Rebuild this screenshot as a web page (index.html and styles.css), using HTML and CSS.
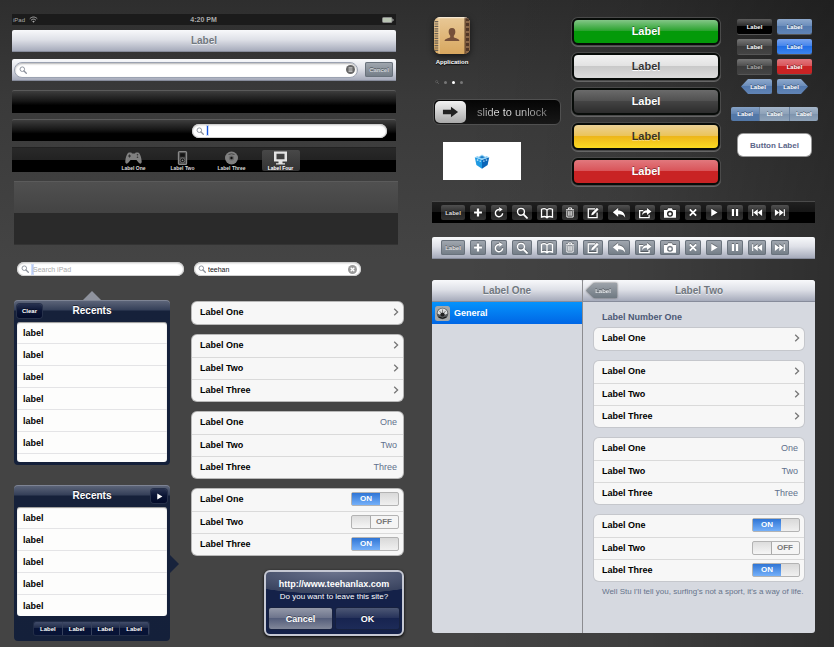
FILE: index.html
```html
<!DOCTYPE html>
<html lang="en">
<head>
<meta charset="utf-8">
<title>iPad interface kit</title>
<meta name="viewport" content="width=device-width, initial-scale=1">
<link rel="stylesheet" href="styles.css">
</head>
<body>
<svg class="sprite" aria-hidden="true">
  <symbol id="i-search" viewBox="0 0 14 14"><circle cx="5.8" cy="5.6" r="4" fill="none" stroke="currentColor" stroke-width="1.6"/><path d="M8.8 8.7l4 4" stroke="currentColor" stroke-width="2.2" stroke-linecap="round"/></symbol>
  <symbol id="i-plus" viewBox="0 0 14 14"><path d="M7 2v10M2 7h10" stroke="currentColor" stroke-width="2.8"/></symbol>
  <symbol id="i-refresh" viewBox="0 0 14 14"><path d="M7.5 3.2A4.6 4.6 0 1 0 11.6 8" fill="none" stroke="currentColor" stroke-width="1.8"/><path d="M7 .2l4.6 2.6L7.6 6z" fill="currentColor"/></symbol>
  <symbol id="i-book" viewBox="0 0 16 14"><path d="M8 3.6C6.6 1.8 3.8 1.6 1.6 2.6v9.2c2.2-.9 5-.8 6.4.7 1.4-1.5 4.200-1.600 6.400-.7V2.600C12.200 1.600 9.400 1.800 8 3.600zM8 3.600v8.600" fill="none" stroke="currentColor" stroke-width="1.500"/></symbol>
  <symbol id="i-trash" viewBox="0 0 14 14"><path d="M2 3.500h10M5 3.200V1.200h4v2M3 4.500v8.300h8V4.500M5.400 5.200v6M7 5.200v6M8.600 5.200v6" fill="none" stroke="currentColor" stroke-width="1.200"/></symbol>
  <symbol id="i-compose" viewBox="0 0 14 14"><path d="M9.500 2.200H1.500v10.300h10.300V6.500" fill="none" stroke="currentColor" stroke-width="1.500"/><path d="M5 9.600l.6-2.500L11.600 1l1.900 1.800-6.100 6.200z" fill="currentColor"/></symbol>
  <symbol id="i-reply" viewBox="0 0 16 14"><path d="M.8 6.200L7 1.200v3c4.500 0 8 2.600 8.200 8.200C13.600 9.400 11 8.300 7 8.400v3z" fill="currentColor"/></symbol>
  <symbol id="i-share" viewBox="0 0 16 14"><path d="M6 4.200H1.800v8.300h11V9" fill="none" stroke="currentColor" stroke-width="1.500"/><path d="M4.500 9.500c.2-4 2.500-5.800 5.800-5.800V1.200l5.200 4-5.200 4V6.700c-2.600 0-4.300.6-5.800 2.800z" fill="currentColor"/></symbol>
  <symbol id="i-camera" viewBox="0 0 16 14"><path fill-rule="evenodd" d="M1 3.500h3.800l1.100-1.900h4.200l1.100 1.900H15v9H1zM8 4.400a3.500 3.500 0 1 0 0 7 3.500 3.500 0 0 0 0-7zm0 1.600a1.900 1.900 0 1 1 0 3.800 1.900 1.900 0 0 1 0-3.800z" fill="currentColor"/></symbol>
  <symbol id="i-close" viewBox="0 0 14 14"><path d="M3 3l8 8M11 3l-8 8" stroke="currentColor" stroke-width="2.300"/></symbol>
  <symbol id="i-play" viewBox="0 0 14 14"><path d="M3.500 2.200l8 4.800-8 4.800z" fill="currentColor"/></symbol>
  <symbol id="i-pause" viewBox="0 0 14 14"><path d="M3 2.500h2.800v9H3zM8.200 2.500H11v9H8.200z" fill="currentColor"/></symbol>
  <symbol id="i-prev" viewBox="0 0 16 14"><path d="M1.500 2.500H3v9H1.500zM9 2.500v9L3.200 7zM14.800 2.500v9L9 7z" fill="currentColor"/></symbol>
  <symbol id="i-next" viewBox="0 0 16 14"><path d="M13 2.500h1.500v9H13zM7 2.500v9L12.800 7zM1.200 2.500v9L7 7z" fill="currentColor"/></symbol>
  <symbol id="i-chevron" viewBox="0 0 6 8"><path d="M1.200 .8L4.600 4 1.200 7.200" fill="none" stroke="currentColor" stroke-width="1.300"/></symbol>
</svg>

<main class="page">
  <section class="column">
    <header class="status bar">
      <span class="status-left">iPad
        <svg width="9" height="7" viewBox="0 0 18 14" aria-hidden="true"><path d="M1.500 5.500c4.500-4.600 10.500-4.600 15 0M4.200 8.400c2.900-2.900 6.700-2.900 9.600 0" fill="none" stroke="#aaa" stroke-width="2"/><path d="M6.500 10.700c1.600-1.400 3.400-1.400 5 0L9 13.400z" fill="#aaa"/></svg>
      </span>
      <span class="status-time">4:20 PM</span>
      <svg class="battery" width="12" height="6" viewBox="0 0 12 6" aria-hidden="true"><rect x=".5" y=".5" width="9.500" height="5" rx="1" fill="#b9c4b3" stroke="#888"/><path d="M10.500 2h1v2h-1z" fill="#aaa"/></svg>
    </header>
    <h1 class="bar nav silver">Label</h1>
    <form class="bar silver finder">
      <label class="field wide"><svg class="glass"><use href="#i-search"/></svg><input type="search" aria-label="Search"><svg class="reader" viewBox="0 0 10 10" aria-hidden="true"><circle cx="5" cy="5" r="5" fill="#666"/><path d="M2.800 3h4.400M2.800 4.400h4.400M2.800 5.800h4.400M2.800 7.200h4.400" stroke="#ddd" stroke-width=".8"/></svg></label>
      <button class="tool steel cancel" type="button">Cancel</button>
    </form>
    <div class="bar black"></div>
    <div class="bar black short"><label class="field pill"><svg class="glass"><use href="#i-search"/></svg><span class="caret"></span><input type="search" aria-label="Search page"></label></div>
    <nav class="bar tabs">
      <a class="tab" href="#one"><svg viewBox="0 0 17 12"><path d="M4 .5h2.300l.7.900h3l.7-.9H13c2 0 3.500 5.500 3.700 9 .1 2.500-2 2.800-3.200 1L11.500 8h-6l-2 2.500c-1.200 1.800-3.300 1.500-3.200-1C.5 6 2 .5 4 .5z" fill="#808080"/><path d="M3 4h3M4.500 2.500v3" stroke="#333" stroke-width="1"/><circle cx="12.500" cy="2.800" r=".8" fill="#333"/><circle cx="12.500" cy="5.200" r=".8" fill="#333"/></svg>Label One</a>
      <a class="tab" href="#two"><svg viewBox="0 0 10 15"><rect x=".7" y=".7" width="8.600" height="13.600" rx="1" fill="#444" stroke="#888" stroke-width="1.400"/><rect x="2.500" y="2.400" width="5" height="3.800" fill="#151515"/><circle cx="5" cy="10" r="2.500" fill="#111" stroke="#888" stroke-width=".7"/><circle cx="5" cy="10" r="1" fill="#888"/></svg>Label Two</a>
      <a class="tab" href="#three"><svg viewBox="0 0 14 14"><circle cx="7" cy="7" r="6.500" fill="#808080"/><path d="M4 3.500q3-1.500 6 0" stroke="#444" fill="none"/><circle cx="7" cy="7" r="2.600" fill="#666"/><circle cx="7" cy="7" r="1.200" fill="#111"/></svg>Label Three</a>
      <a class="tab current" href="#four"><svg viewBox="0 0 14 14"><path fill-rule="evenodd" d="M.5.500h13v10H.5zM3 2.800v5.400h8V2.800zM5 10.500h4v1.800h2.500v1.200h-9v-1.200H5z" fill="#e4e4e4"/></svg>Label Four</a>
    </nav>
    <div class="shelf"><div></div><div></div></div>
    <div class="searches">
      <label class="field pill"><svg class="glass"><use href="#i-search"/></svg><span class="caret pale"></span><input type="search" placeholder="Search iPad" aria-label="Search iPad"></label>
      <label class="field pill"><svg class="glass"><use href="#i-search"/></svg><input type="search" value="teehan" aria-label="Search term"><svg class="reader" viewBox="0 0 10 10" aria-hidden="true"><circle cx="5" cy="5" r="5" fill="#999"/><path d="M3 3l4 4M7 3L3 7" stroke="#fff" stroke-width="1.400"/></svg></label>
    </div>

    <div class="lower">
      <div class="popovers">
        <section class="popover up">
          <header><button class="mini left" type="button">Clear</button><h2>Recents</h2></header>
          <ul class="tall"><li>label</li><li>label</li><li>label</li><li>label</li><li>label</li><li>label</li><li></li></ul>
        </section>
        <section class="popover side">
          <header><h2>Recents</h2><button class="mini right" type="button" aria-label="Play"><svg><use href="#i-play"/></svg></button></header>
          <ul><li>label</li><li>label</li><li>label</li><li>label</li><li>label</li></ul>
          <footer><button type="button">Label</button><button type="button">Label</button><button type="button">Label</button><button type="button">Label</button></footer>
        </section>
      </div>
      <div class="groups">
        <ul class="group"><li><a href="#a">Label One<svg><use href="#i-chevron"/></svg></a></li></ul>
        <ul class="group">
          <li><a href="#a">Label One<svg><use href="#i-chevron"/></svg></a></li>
          <li><a href="#b">Label Two<svg><use href="#i-chevron"/></svg></a></li>
          <li><a href="#c">Label Three<svg><use href="#i-chevron"/></svg></a></li>
        </ul>
        <ul class="group"><li>Label One<span class="value">One</span></li><li>Label Two<span class="value">Two</span></li><li>Label Three<span class="value">Three</span></li></ul>
        <ul class="group">
          <li><label for="s1">Label One</label><span class="switch on"><input id="s1" type="checkbox" checked><span>ON</span></span></li>
          <li><label for="s2">Label Two</label><span class="switch"><input id="s2" type="checkbox"><span>OFF</span></span></li>
          <li><label for="s3">Label Three</label><span class="switch on"><input id="s3" type="checkbox" checked><span>ON</span></span></li>
        </ul>
        <section class="alert" role="alertdialog">
          <h2>http://www.teehanlax.com</h2>
          <p>Do you want to leave this site?</p>
          <div><button class="pale" type="button">Cancel</button><button type="button">OK</button></div>
        </section>
      </div>
    </div>
  </section>

  <section class="column">
    <div class="showcase">
      <div class="home">
        <figure class="app">
          <svg viewBox="0 0 36 37" aria-hidden="true">
            <defs><linearGradient id="tan" x2="0" y2="1"><stop stop-color="#e8c896"/><stop offset="1" stop-color="#d8a75f"/></linearGradient><clipPath id="round"><rect width="36" height="37" rx="6"/></clipPath></defs>
            <g clip-path="url(#round)"><rect width="36" height="37" fill="url(#tan)"/><path d="M31 0h5v37h-5z" fill="#8a6748"/><path d="M33.500 1v36" stroke="#503626" stroke-width="3" stroke-dasharray="3 2"/><path d="M31 0v37" stroke="#5c4029"/><path d="M2.500 4v30" stroke="#6b6256" stroke-width="4" stroke-dasharray="1.200 1.200"/><path d="M5 0v37" stroke="#f1dcb5" stroke-width=".8"/><path d="M0 .7h36" stroke="#fff" stroke-opacity=".7"/></g>
            <path d="M18 11c2.700 0 3.600 2 3.300 4.500-.2 1.600-1 2.600-1.500 3.300v1.500c2 1.200 5.200 1.300 5.700 3.700h-15c.5-2.400 3.700-2.500 5.700-3.700v-1.500c-.5-.7-1.300-1.700-1.500-3.300C14.400 13 15.300 11 18 11z" fill="#76503a"/>
          </svg>
          <figcaption>Application</figcaption>
        </figure>
        <div class="dots" aria-hidden="true"><svg><use href="#i-search"/></svg><i></i><i class="now"></i><i></i></div>
        <div class="unlock"><button type="button" aria-label="Unlock"><svg viewBox="0 0 18 12"><path d="M1 3.500h8.500V.5L17 6l-7.500 5.500v-3H1z" fill="#222"/></svg></button><span>slide to unlock</span></div>
        <div class="card"><svg viewBox="0 0 16 15" aria-hidden="true"><path d="M.8 3.200L8 5.800v8.900L2.400 11z" fill="#1f9ae2"/><path d="M15.200 3.200L8 5.800v8.900l5.600-3.700z" fill="#0b66b8"/><path d="M.8 3.200L3.600 2l1.200.8L8 .6l3.200 2.200 1.200-.8 2.800 1.200L8 5.800z" fill="#8fd0f6"/><path d="M5 3.300l3-1.200 3 1.200-3 1z" fill="#1a7cc8"/><path d="M2.800 5.800l1.500.6M5.600 7l1.200.4" stroke="#d8f0ff" stroke-width="1.200"/><path d="M9.300 7.400l1.200-.5M11.800 6.400l1.400-.6" stroke="#b5dcf8" stroke-width="1.200"/></svg></div>
      </div>
      <div class="big-buttons">
        <button class="big green" type="button">Label</button>
        <button class="big white" type="button">Label</button>
        <button class="big grey" type="button">Label</button>
        <button class="big yellow" type="button">Label</button>
        <button class="big red" type="button">Label</button>
      </div>
      <div class="small-buttons">
        <div class="pairs">
          <button class="small ink" type="button">Label</button><button class="small blue" type="button">Label</button>
          <button class="small coal" type="button">Label</button><button class="small azure" type="button">Label</button>
          <button class="small coal dim" type="button">Label</button><button class="small red" type="button">Label</button>
          <button class="small blue point-left" type="button">Label</button><button class="small blue point-right" type="button">Label</button>
        </div>
        <div class="segments"><button class="picked" type="button">Label</button><button type="button">Label</button><button type="button">Label</button></div>
        <button class="plain" type="button">Button Label</button>
      </div>
    </div>

    <div class="toolbar dark" role="toolbar" aria-label="Dark toolbar">
      <button class="tool text" type="button">Label</button>
      <button class="tool" type="button" aria-label="Add"><svg><use href="#i-plus"/></svg></button>
      <button class="tool" type="button" aria-label="Refresh"><svg><use href="#i-refresh"/></svg></button>
      <button class="tool mid" type="button" aria-label="Search"><svg><use href="#i-search"/></svg></button>
      <button class="tool mid" type="button" aria-label="Bookmarks"><svg><use href="#i-book"/></svg></button>
      <button class="tool" type="button" aria-label="Delete"><svg><use href="#i-trash"/></svg></button>
      <button class="tool mid" type="button" aria-label="Compose"><svg><use href="#i-compose"/></svg></button>
      <button class="tool wide" type="button" aria-label="Reply"><svg><use href="#i-reply"/></svg></button>
      <button class="tool mid" type="button" aria-label="Share"><svg><use href="#i-share"/></svg></button>
      <button class="tool mid" type="button" aria-label="Camera"><svg><use href="#i-camera"/></svg></button>
      <button class="tool" type="button" aria-label="Stop"><svg><use href="#i-close"/></svg></button>
      <button class="tool" type="button" aria-label="Play"><svg><use href="#i-play"/></svg></button>
      <button class="tool" type="button" aria-label="Pause"><svg><use href="#i-pause"/></svg></button>
      <button class="tool skip" type="button" aria-label="Previous"><svg><use href="#i-prev"/></svg></button>
      <button class="tool skip" type="button" aria-label="Next"><svg><use href="#i-next"/></svg></button>
    </div>
    <div class="toolbar silver" role="toolbar" aria-label="Light toolbar">
      <button class="tool steel text" type="button">Label</button>
      <button class="tool steel" type="button" aria-label="Add"><svg><use href="#i-plus"/></svg></button>
      <button class="tool steel" type="button" aria-label="Refresh"><svg><use href="#i-refresh"/></svg></button>
      <button class="tool steel mid" type="button" aria-label="Search"><svg><use href="#i-search"/></svg></button>
      <button class="tool steel mid" type="button" aria-label="Bookmarks"><svg><use href="#i-book"/></svg></button>
      <button class="tool steel" type="button" aria-label="Delete"><svg><use href="#i-trash"/></svg></button>
      <button class="tool steel mid" type="button" aria-label="Compose"><svg><use href="#i-compose"/></svg></button>
      <button class="tool steel wide" type="button" aria-label="Reply"><svg><use href="#i-reply"/></svg></button>
      <button class="tool steel mid" type="button" aria-label="Share"><svg><use href="#i-share"/></svg></button>
      <button class="tool steel mid" type="button" aria-label="Camera"><svg><use href="#i-camera"/></svg></button>
      <button class="tool steel" type="button" aria-label="Stop"><svg><use href="#i-close"/></svg></button>
      <button class="tool steel" type="button" aria-label="Play"><svg><use href="#i-play"/></svg></button>
      <button class="tool steel" type="button" aria-label="Pause"><svg><use href="#i-pause"/></svg></button>
      <button class="tool steel skip" type="button" aria-label="Previous"><svg><use href="#i-prev"/></svg></button>
      <button class="tool steel skip" type="button" aria-label="Next"><svg><use href="#i-next"/></svg></button>
    </div>

    <div class="split">
      <section class="master">
        <h2 class="nav silver">Label One</h2>
        <a class="selected" href="#general"><svg viewBox="0 0 15 15" aria-hidden="true"><rect width="15" height="15" rx="2.500" fill="#a5a8aa"/><circle cx="7.500" cy="7.500" r="5.800" fill="#55595c"/><path d="M2.500 7.500a5 5 0 0 1 10 0l-2.500 1.200a2.600 2.600 0 0 0-5 0z" fill="#dcdedf"/><path d="M4.500 5l1.500 2M7.500 3.500v3M10.500 5L9 7" stroke="#555" stroke-width=".7"/><circle cx="7.500" cy="8.500" r="1.900" fill="#222"/><path d="M3.500 11q4 2.500 8 0" stroke="#111" fill="none"/></svg>General</a>
      </section>
      <section class="detail">
        <header class="nav silver"><span class="back"><button type="button">Label</button></span><h2>Label Two</h2></header>
        <h3>Label Number One</h3>
        <div class="groups">
          <ul class="group"><li><a href="#a">Label One<svg><use href="#i-chevron"/></svg></a></li></ul>
          <ul class="group">
            <li><a href="#a">Label One<svg><use href="#i-chevron"/></svg></a></li>
            <li><a href="#b">Label Two<svg><use href="#i-chevron"/></svg></a></li>
            <li><a href="#c">Label Three<svg><use href="#i-chevron"/></svg></a></li>
          </ul>
          <ul class="group"><li>Label One<span class="value">One</span></li><li>Label Two<span class="value">Two</span></li><li>Label Three<span class="value">Three</span></li></ul>
          <ul class="group">
            <li><label for="d1">Label One</label><span class="switch on"><input id="d1" type="checkbox" checked><span>ON</span></span></li>
            <li><label for="d2">Label Two</label><span class="switch"><input id="d2" type="checkbox"><span>OFF</span></span></li>
            <li><label for="d3">Label Three</label><span class="switch on"><input id="d3" type="checkbox" checked><span>ON</span></span></li>
          </ul>
        </div>
        <p class="note">Well Stu I'll tell you, surfing's not a sport, it's a way of life.</p>
      </section>
    </div>
  </section>
</main>
</body>
</html>
```
FILE: styles.css
```css
* { box-sizing: border-box; }

body {
  margin: 0;
  min-height: 100vh;
  font-family: "Liberation Sans", Arial, sans-serif;
  font-size: 9px;
  background:
    linear-gradient(to right, transparent 55%, rgba(0, 0, 0, .08) 75%, rgba(0, 0, 0, .32)),
    linear-gradient(#2e2e2e, #3a3a3a 100px, #444 260px);
}

h1, h2, h3, p, ul, figure { margin: 0; padding: 0; font-size: inherit; }
ul { list-style: none; }
a { color: inherit; text-decoration: none; }
svg { display: block; flex: none; }
.sprite { position: absolute; width: 0; height: 0; }

button {
  margin: 0;
  padding: 0;
  border: 0;
  font-family: inherit;
  font-size: 6px;
  font-weight: bold;
  color: #fff;
  text-shadow: 0 -1px 0 rgba(0, 0, 0, .4);
}

.page {
  display: grid;
  grid-template-columns: 392fr 387fr;
  column-gap: 27px;
  padding: 14px 16px 5px 12px;
}

/* Bars */
.bar {
  height: 22px;
  margin: 0 8px 7px 0;
}

.silver {
  background: linear-gradient(#f8f9fb, #dfe1e8 45%, #a6abbb);
  border-bottom: 1px solid #878c9b;
  border-radius: 2px 2px 0 0;
}

.nav {
  display: flex;
  align-items: center;
  justify-content: center;
  height: 22px;
  font-size: 10px;
  font-weight: bold;
  color: #71787f;
  text-shadow: 0 1px 0 rgba(255, 255, 255, .7);
}

.status {
  display: grid;
  grid-template-columns: 1fr auto 1fr;
  align-items: center;
  height: 11px;
  margin-bottom: 5px;
  padding: 0 2px 0 1px;
  background: #1b1b1b;
  color: #aaa;
  font-size: 7px;
}
.status-left { display: flex; align-items: center; gap: 4px; font-size: 6px; }
.status-time { font-weight: bold; }
.battery { justify-self: end; }

.finder {
  display: flex;
  align-items: center;
  gap: 7px;
  margin-bottom: 9px;
  padding: 0 3px 0 2px;
}

.field {
  display: flex;
  align-items: center;
  height: 14px;
  padding: 0 4px;
  border-radius: 8px;
  background: #fff;
  color: #111;
}
.field input {
  flex: 1;
  min-width: 0;
  width: 100%;
  margin: 0;
  padding: 0;
  border: 0;
  outline: 0;
  background: none;
  font-family: inherit;
  font-size: 7px;
  color: #111;
  appearance: none;
}
.field input::placeholder { color: #aaa; opacity: 1; }
.field input::-webkit-search-cancel-button { display: none; }
.field.wide { flex: 1; height: 16px; padding: 0 2px 0 4px; border: 1px solid #9ba2b1; box-shadow: inset 0 1px 2px rgba(0, 0, 0, .3); }
.field.pill { box-shadow: inset 0 0 0 1px #d0d0d0, inset 0 1px 2px rgba(0, 0, 0, .3); }
.glass { width: 8px; height: 8px; margin-right: 2px; color: #8a8f9a; }
.reader { width: 9px; height: 9px; }
.caret { width: 1px; height: 9px; margin-left: 1px; background: #1556e0; outline: 1px solid rgba(21, 86, 224, .2); }
.caret.pale { background: #b9ccf6; }

.black {
  height: 23px;
  margin-bottom: 6px;
  border-top: 1px solid #5a5a5a;
  border-radius: 2px 2px 0 0;
  background: linear-gradient(#3d3d3d, #171717 45%, #000 65%);
}
.black.short { display: flex; align-items: center; justify-content: flex-end; height: 22px; padding-right: 9px; }
.black .field { width: 52%; }

.tabs {
  display: flex;
  justify-content: center;
  gap: 11px;
  height: 25px;
  margin-bottom: 9px;
  padding: 2px 0 1px 6px;
  border-top: 1px solid #222;
  background: linear-gradient(#292929, #222 48%, #000 50%);
}
.tab {
  display: flex;
  flex-direction: column;
  align-items: center;
  justify-content: space-between;
  width: 38px;
  border-radius: 2px;
  font-size: 5px;
  line-height: 6px;
  font-weight: bold;
  color: #ddd;
  white-space: nowrap;
}
.tab svg { width: 17px; height: 14px; margin-top: 1px; }
.tab.current { background: linear-gradient(#484848, #333); color: #fff; }

.shelf { margin: 0 6px 17px 2px; background: #2a2a2a; }
.shelf div { height: 32px; border-bottom: 1px solid #333; }
.shelf div:first-child { border-top: 1px solid #5b5b5b; background: linear-gradient(#505050, #434343); border-bottom: 0; }

.searches { display: grid; grid-template-columns: 167fr 167fr; gap: 10px; margin: 0 43px 24px 5px; }

/* Popovers and grouped tables */
.lower { display: grid; grid-template-columns: 156fr 211fr; column-gap: 22px; margin: 0 1px 0 2px; }
.popovers { display: flex; flex-direction: column; gap: 20px; }

.popover {
  position: relative;
  padding: 0 3px 3px;
  border-radius: 4px;
  background: linear-gradient(#60687c, #343f58 10px, #16213a 11px, #14203a);
  box-shadow: inset 0 1px 0 rgba(255, 255, 255, .2);
}
.popover::before { content: ""; position: absolute; }
.up::before { left: 50%; top: -9px; margin-left: -9px; border: 9px solid transparent; border-top: 0; border-bottom-color: #8f939e; }
.side::before { left: 100%; top: 70px; border: 9px solid transparent; border-right: 0; border-left-color: #18233c; }
.popover header { display: flex; align-items: center; justify-content: center; height: 22px; padding-bottom: 2px; }
.popover h2 { font-size: 10px; color: #fff; text-shadow: 0 -1px 0 rgba(0, 0, 0, .5); }

.mini {
  position: absolute;
  top: 4px;
  height: 14px;
  border-radius: 3px;
  background: linear-gradient(#27314f, #0a1434 48%, #020a28);
  box-shadow: 0 0 0 1px #26304a;
}
.mini.left { left: 3px; width: 25px; }
.mini.right { right: 3px; width: 16px; }
.mini svg { width: 9px; height: 9px; margin: auto; }

.popover ul {
  height: 109px;
  overflow: hidden;
  border-radius: 3px;
  background: #fdfdfc;
  box-shadow: inset 0 1px 1px rgba(0, 0, 0, .4);
  font-weight: bold;
}
.popover ul.tall { height: 140px; }
.popover li { height: 22px; padding: 0 6px; line-height: 22px; border-bottom: 1px solid #e4e4e6; }
.popover li:last-child { border-bottom: 0; }

.popover footer { display: flex; margin: 6px 18px 3px 17px; border-radius: 2px; overflow: hidden; box-shadow: 0 0 0 1px #222d47; }
.popover footer button { flex: 1; height: 13px; background: linear-gradient(#414c69, #1d2947 48%, #071336 50%); border-right: 1px solid #36415c; }

.groups { display: flex; flex-direction: column; gap: 11px; }
.lower .groups { padding-top: 2px; }
.group { border-radius: 5px; background: #f7f7f7; font-weight: bold; box-shadow: 0 0 0 1px #b8b8b8; color: #000; }
.group li, .group a { display: flex; align-items: center; justify-content: space-between; }
.group li { height: 22px; padding: 0 4px 2px 8px; }
.group li + li { border-top: 1px solid #dadada; }
.group a { flex: 1; height: 100%; }
.group a svg { width: 6px; height: 8px; color: #777; }
.value { padding-right: 2px; font-weight: normal; color: #61708c; }

.switch {
  position: relative;
  display: flex;
  align-items: center;
  width: 48px;
  height: 14px;
  border: 1px solid #b3b3b3;
  border-radius: 2px;
  background: linear-gradient(to right, transparent 18px, #aaa 18px, #aaa 19px, #f5f5f5 19px), linear-gradient(#ddd, #f6f6f6);
  font-size: 8px;
  color: #777;
}
.switch span { width: 28px; margin-left: 18px; text-align: center; }
.switch input { position: absolute; inset: 0; width: 100%; height: 100%; margin: 0; opacity: 0; }
.switch.on { background: linear-gradient(#d9d9d9, #f0f0f0); }
.switch.on span { margin-left: 0; line-height: 12px; background: linear-gradient(#2f75d5, #75b0f9); color: #fff; }

.alert {
  align-self: flex-end;
  width: 140px;
  height: 66px;
  margin: 4px -1px 0 0;
  padding: 7px 3px 3px;
  border: 2px solid #c5c8d3;
  border-radius: 6px;
  background: radial-gradient(ellipse 110px 22px at 50% 0, #6b738c, #39435f 98%, transparent), #142149;
  box-shadow: 0 1px 3px #000;
  color: #fff;
  text-align: center;
}
.alert h2 { line-height: 10px; }
.alert p { margin: 3px 0 6px; font-size: 8px; line-height: 10px; white-space: nowrap; }
.alert div { display: grid; grid-template-columns: 1fr 1fr; gap: 4px; }
.alert button { height: 21px; border-radius: 2px; font-size: 9px; background: linear-gradient(#4d5875, #26325a 48%, #172450 50%, #1d2b58); box-shadow: 0 0 0 1px #17213f; }
.alert .pale { background: linear-gradient(#9499a9, #6c738b 48%, #555e7b 50%, #818799); }

/* Home screen samples */
.showcase { display: grid; grid-template-columns: 128fr 148fr 87fr; column-gap: 11px; padding: 4px 0 0 2px; margin-bottom: 16px; }
.home { display: flex; flex-direction: column; align-items: flex-start; }
.app { display: flex; flex-direction: column; align-items: center; width: 36px; margin: -1px 0 0 1px; }
.app svg { width: 36px; height: 37px; filter: drop-shadow(0 2px 3px rgba(0, 0, 0, .6)); }
.app figcaption { margin-top: 4px; font-size: 6px; line-height: 8px; font-weight: bold; color: #fff; text-shadow: 0 1px 1px #000; }
.dots { display: flex; align-items: center; gap: 5px; height: 6px; margin: 13px 0 0 2px; color: #777; }
.dots svg { width: 4px; height: 4px; }
.dots i { width: 3px; height: 3px; border-radius: 50%; background: #777; }
.dots .now { background: #fff; }

.unlock {
  display: flex;
  align-items: center;
  width: 100%;
  height: 26px;
  margin-top: 14px;
  padding: 1px;
  border: 1px solid #505050;
  border-radius: 6px;
  background: linear-gradient(#050505, #171717);
  font-size: 11px;
  white-space: nowrap;
}
.unlock button { flex: none; width: 31px; height: 22px; border-radius: 5px; background: linear-gradient(#f2f2f2, #a9a9a9); }
.unlock button svg { width: 17px; height: 12px; margin: auto; }
.unlock span { margin-left: 11px; background: linear-gradient(to right, #8a8a8a, #f0f0f0 35%, #ccc 60%, #777); background-clip: text; color: transparent; }
.card { display: flex; align-items: center; justify-content: center; width: 78px; height: 38px; margin: 17px 0 0 10px; background: #fff; }
.card svg { width: 16px; height: 15px; }

/* Buttons */
.big-buttons { display: flex; flex-direction: column; gap: 8px; }
.big { height: 27px; padding-bottom: 1px; border: 2px solid #080c09; border-radius: 6px; font-size: 11px; box-shadow: 0 0 0 1px #4a4a4a, 0 1px 0 1px #666; }
.green { background: linear-gradient(#84c688, #27a22b 48%, #049a09 50%); }
.white { background: linear-gradient(#f2f2f2, #e2e2e2 48%, #c9c9c9 50%, #ddd); color: #333; text-shadow: 0 1px 0 #fff; }
.grey { background: linear-gradient(#6b6b6b, #505050 48%, #434343 50%, #2c2c2c); }
.yellow { background: linear-gradient(#ebd197, #ebc458 48%, #edb61a 50%, #fbdb22); color: #3a3320; text-shadow: 0 1px 0 rgba(255, 255, 255, .4); }
.red { background: linear-gradient(#e1787d, #d95358 48%, #c92324 50%); }

.small-buttons { display: flex; flex-direction: column; align-items: center; padding-top: 1px; }
.pairs { display: grid; grid-template-columns: 35px 35px; gap: 5px; }
.small { height: 15px; border-radius: 2px; box-shadow: 0 1px 0 #555; }
.small.ink { background: linear-gradient(#5e5e5e, #292929 48%, #000 50%); }
.small.coal { background: linear-gradient(#777, #4d4d4d 48%, #3c3c3c 50%, #444); }
.small.dim { color: #aaa; }
.small.blue { background: linear-gradient(#8ea9cc, #6a8cba 48%, #547aae 50%, #6184b5); }
.small.azure { background: linear-gradient(#79a4f0, #4384ec 48%, #216ee6 50%, #3d85ed); }
.point-left { width: 31px; margin-left: 4px; padding-left: 3px; clip-path: polygon(0 50%, 7px 0, 100% 0, 100% 100%, 7px 100%); }
.point-right { width: 31px; padding-right: 3px; clip-path: polygon(0 0, 24px 0, 100% 50%, 24px 100%, 0 100%); }
.segments { display: flex; align-self: stretch; margin: 13px 0; border-radius: 2px; overflow: hidden; }
.segments button { flex: 1; height: 14px; background: linear-gradient(#a6b6c9, #8ea2b9 48%, #7e94ae 50%, #8fa3b9); }
.segments button + button { border-left: 1px solid #6b83a1; }
.segments .picked { background: linear-gradient(#86a2c5, #6486b3 48%, #5378a8 50%); }
.plain { width: 73px; height: 22px; border-radius: 5px; background: #fff; box-shadow: 0 0 0 1px #999; color: #5a6589; font-size: 8px; text-shadow: none; }

.toolbar { display: flex; align-items: center; gap: 5px; height: 22px; margin: 0 3px 14px 1px; padding-left: 9px; }
.toolbar.dark { border-top: 1px solid #4b4b4b; background: linear-gradient(#202020, #151515 48%, #000 50%); }
.toolbar.silver { margin-bottom: 21px; }
.tool {
  flex: none;
  width: 16px;
  height: 15px;
  border-radius: 2px;
  background: linear-gradient(#505050, #2f2f2f 48%, #232323 50%, #333);
}
.tool svg { width: 12px; height: 11px; margin: auto; filter: drop-shadow(0 -1px 0 rgba(0, 0, 0, .3)); }
.tool.mid { width: 20px; }
.tool.wide { width: 22px; }
.tool.mid svg, .tool.wide svg { width: 14px; height: 12px; }
.tool.skip { width: 18px; }
.tool.text { width: 24px; color: #ddd; }
.tool.steel { background: linear-gradient(#a3a9b1, #717b85); box-shadow: inset 0 0 0 1px #69727c; }
.tool.cancel { width: 28px; color: #ccd1d7; }

/* Split view */
.split {
  display: grid;
  grid-template-columns: 150fr 233fr;
  min-height: 353px;
  margin: 0 3px 0 1px;
  border-radius: 3px;
  overflow: hidden;
  background: #d6d9e0;
}
.detail { border-left: 1px solid #8c8c90; }
.detail .nav { position: relative; }
.selected { display: flex; align-items: center; gap: 4px; height: 22px; padding: 0 3px; background: linear-gradient(#0593fc, #0066e5); color: #fff; font-weight: bold; }
.selected svg { width: 15px; height: 15px; }
.back { position: absolute; left: 3px; top: 3px; filter: drop-shadow(0 0 1px #555); }
.back button { display: block; width: 31px; height: 15px; padding-left: 3px; background: linear-gradient(#9da3aa, #6f7982); clip-path: polygon(0 50%, 8px 0, 100% 0, 100% 100%, 8px 100%); color: #e5e8eb; }
.detail h3 { margin: 10px 19px 5px; line-height: 11px; color: #4c5875; }
.detail .groups { margin: 0 11px; }
.detail .group { box-shadow: 0 0 0 1px #c5c7cc; }
.note { margin: 6px 9px 0 19px; font-size: 8px; line-height: 10px; color: #66748b; white-space: nowrap; }
```
